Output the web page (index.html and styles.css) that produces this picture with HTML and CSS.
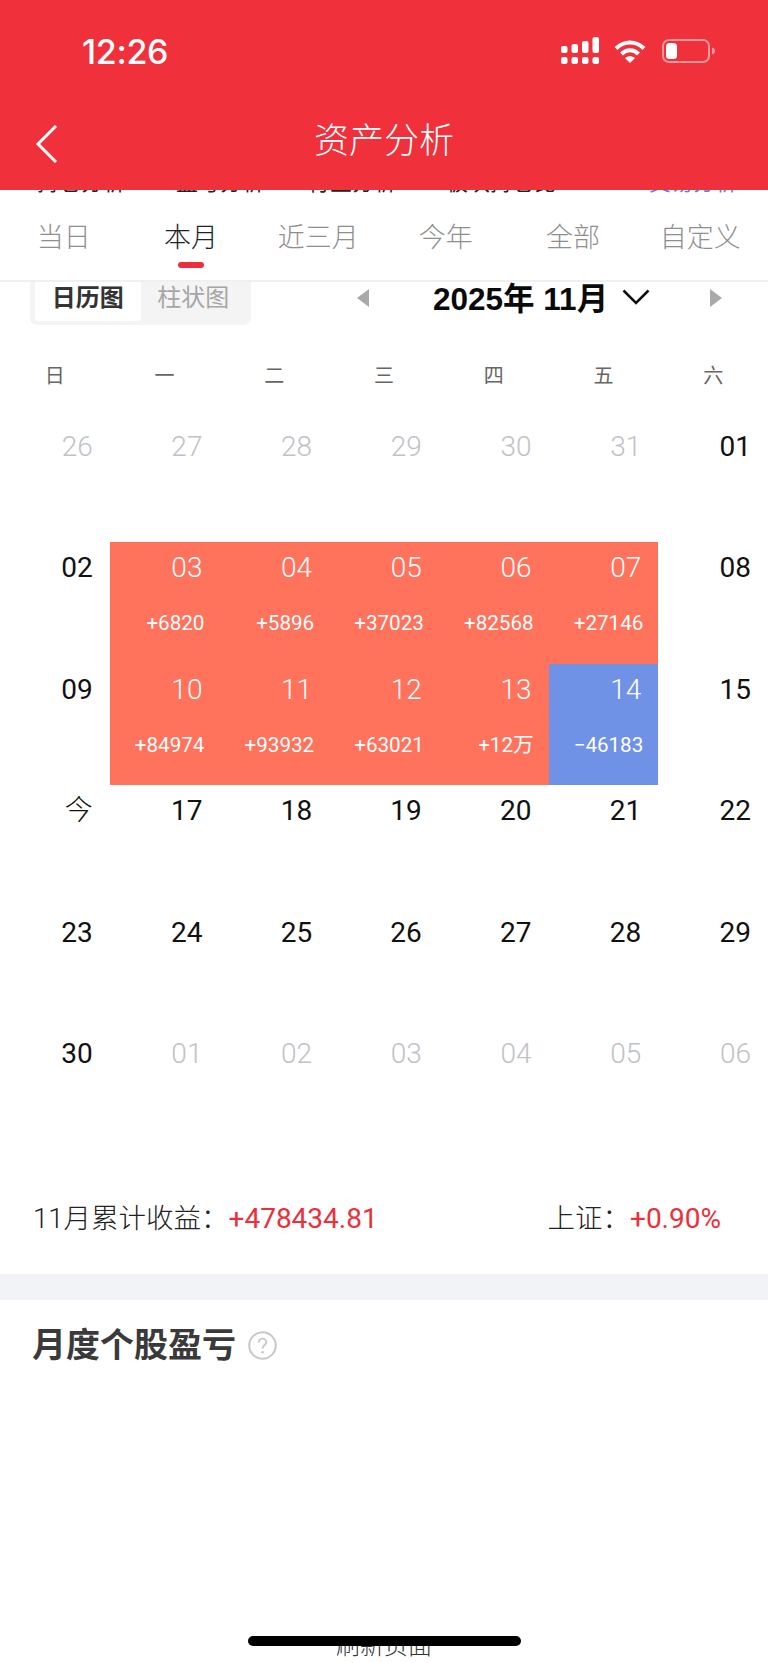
FILE: index.html
```html
<!DOCTYPE html>
<html lang="zh-CN">
<head>
<meta charset="utf-8">
<title>资产分析</title>
<link rel="stylesheet" href="styles.css">
</head>
<body>
<div class="page">
  <header class="top">
    <div class="status">
      <span class="time">12:26</span>
      <div class="status-icons">
        <svg class="signal" width="38" height="27" viewBox="0 0 38 27" fill="#fff"><rect x="0" y="9" width="6.5" height="7" rx="2"/><rect x="10.5" y="7" width="6.5" height="9" rx="2"/><rect x="21" y="4" width="6.5" height="12" rx="2"/><rect x="31.5" y="0" width="6.5" height="16" rx="2"/><rect x="0" y="20" width="6.5" height="7" rx="2"/><rect x="10.5" y="20" width="6.5" height="7" rx="2"/><rect x="21" y="20" width="6.5" height="7" rx="2"/><rect x="31.5" y="20" width="6.5" height="7" rx="2"/></svg>
        <svg class="wifi" width="32" height="24" viewBox="0 0 32 24" fill="none" stroke="#fff" stroke-width="4"><path d="M2 9.5C10 1.500 22 1.500 30 9.500"/><path d="M7.500 15C12.500 10 19.500 10 24.500 15"/><path d="M11 19 16 24 21 19C18 16.500 14 16.500 11 19Z" fill="#fff" stroke="none"/></svg>
        <svg class="battery" width="54" height="24" viewBox="0 0 54 24" fill="none"><rect x="1" y="1" width="46" height="22" rx="6" stroke="#fff" stroke-opacity=".5" stroke-width="2"/><rect x="4" y="4" width="11" height="16" rx="3.500" fill="#fff"/><path d="M50 8.500C52 9 53 10.500 53 12S52 15 50 15.500Z" fill="#fff" fill-opacity=".5"/></svg>
      </div>
    </div>
    <div class="nav">
      <svg class="back" width="22" height="38" viewBox="0 0 22 38" fill="none" stroke="#fff" stroke-width="3"><path d="M21 1 3 19 21 37"/></svg>
      <h1 class="nav-title">资产分析</h1>
    </div>
  </header>

  <div class="clipped">
    <span class="clip-a">持仓分析</span><span class="clip-b">盈亏分析</span><span class="clip-c">行业分析</span><span class="clip-d">板块持仓比</span><span class="clip-e">交易分析</span>
  </div>

  <nav class="tabs">
    <span class="tab">当日</span>
    <span class="tab tab-active">本月</span>
    <span class="tab">近三月</span>
    <span class="tab">今年</span>
    <span class="tab">全部</span>
    <span class="tab">自定义</span>
  </nav>

  <section class="toolbar">
    <div class="toggle">
      <span class="toggle-item toggle-on">日历图</span>
      <span class="toggle-item">柱状图</span>
    </div>
    <div class="month-picker">
      <span class="arrow arrow-left"></span>
      <span class="month">2025年 11月</span>
      <svg class="month-chevron" width="28" height="16" viewBox="0 0 28 16" fill="none" stroke="#111" stroke-width="2.500"><path d="M1.500 1.500 14 14 26.500 1.500"/></svg>
      <span class="arrow arrow-right"></span>
    </div>
  </section>

  <div class="weekdays">
    <span>日</span><span>一</span><span>二</span><span>三</span><span>四</span><span>五</span><span>六</span>
  </div>

  <div class="calendar">
    <div class="cell muted"><span class="num">26</span></div>
    <div class="cell muted"><span class="num">27</span></div>
    <div class="cell muted"><span class="num">28</span></div>
    <div class="cell muted"><span class="num">29</span></div>
    <div class="cell muted"><span class="num">30</span></div>
    <div class="cell muted"><span class="num">31</span></div>
    <div class="cell"><span class="num">01</span></div>

    <div class="cell"><span class="num">02</span></div>
    <div class="cell up"><span class="num">03</span><span class="delta">+6820</span></div>
    <div class="cell up"><span class="num">04</span><span class="delta">+5896</span></div>
    <div class="cell up"><span class="num">05</span><span class="delta">+37023</span></div>
    <div class="cell up"><span class="num">06</span><span class="delta">+82568</span></div>
    <div class="cell up"><span class="num">07</span><span class="delta">+27146</span></div>
    <div class="cell"><span class="num">08</span></div>

    <div class="cell"><span class="num">09</span></div>
    <div class="cell up"><span class="num">10</span><span class="delta">+84974</span></div>
    <div class="cell up"><span class="num">11</span><span class="delta">+93932</span></div>
    <div class="cell up"><span class="num">12</span><span class="delta">+63021</span></div>
    <div class="cell up"><span class="num">13</span><span class="delta">+12万</span></div>
    <div class="cell down"><span class="num">14</span><span class="delta">−46183</span></div>
    <div class="cell"><span class="num">15</span></div>

    <div class="cell today"><span class="num">今</span></div>
    <div class="cell"><span class="num">17</span></div>
    <div class="cell"><span class="num">18</span></div>
    <div class="cell"><span class="num">19</span></div>
    <div class="cell"><span class="num">20</span></div>
    <div class="cell"><span class="num">21</span></div>
    <div class="cell"><span class="num">22</span></div>

    <div class="cell"><span class="num">23</span></div>
    <div class="cell"><span class="num">24</span></div>
    <div class="cell"><span class="num">25</span></div>
    <div class="cell"><span class="num">26</span></div>
    <div class="cell"><span class="num">27</span></div>
    <div class="cell"><span class="num">28</span></div>
    <div class="cell"><span class="num">29</span></div>

    <div class="cell"><span class="num">30</span></div>
    <div class="cell muted"><span class="num">01</span></div>
    <div class="cell muted"><span class="num">02</span></div>
    <div class="cell muted"><span class="num">03</span></div>
    <div class="cell muted"><span class="num">04</span></div>
    <div class="cell muted"><span class="num">05</span></div>
    <div class="cell muted"><span class="num">06</span></div>
  </div>

  <div class="summary">
    <div class="summary-item"><span class="label">11月累计收益：</span><span class="red">+478434.81</span></div>
    <div class="summary-item"><span class="label">上证：</span><span class="red">+0.90%</span></div>
  </div>

  <div class="divider"></div>

  <div class="heading">
    <h2 class="heading-text">月度个股盈亏</h2>
    <svg class="help" width="29" height="29" viewBox="0 0 28 28" fill="none"><circle cx="14" cy="14" r="12.800" stroke="#c8c8c8" stroke-width="2"/><path d="M10.300 11C10.300 8.800 12 7.300 14 7.300S17.700 8.800 17.700 10.800C17.700 13.400 14 13.800 14 17" stroke="#c8c8c8" stroke-width="1.800"/><circle cx="14" cy="20.500" r="1.300" fill="#c8c8c8"/></svg>
  </div>

  <div class="refresh">刷新页面</div>
  <div class="home-bar"></div>
</div>
</body>
</html>
```

FILE: styles.css
```css
* { box-sizing: border-box; }
html, body { margin: 0; padding: 0; background: #fff; }
body { font-family: "Liberation Sans", "Noto Sans CJK SC", sans-serif; color: #111; }
h1, h2 { margin: 0; font: inherit; }
.page { position: relative; width: 768px; height: 1663px; overflow: hidden; display: flex; flex-direction: column; background: #fff; }

.top { height: 190px; background: #f0303a; color: #fff; flex: none; }
.status { height: 102px; padding: 40px 52px 0 82px; display: flex; justify-content: space-between; align-items: flex-start; }
.time { font-family: Inter, "Liberation Sans", sans-serif; font-size: 34px; font-weight: 500; line-height: 24px; letter-spacing: -.3px; }
.status-icons { display: flex; align-items: flex-start; margin-top: -1px; }
.signal { margin-top: -2px; margin-right: 15px; }
.wifi { margin-right: 16px; }
.nav { position: relative; display: flex; justify-content: center; padding-top: 15px; }
.back { position: absolute; left: 35px; top: 23px; }
.nav-title { font-size: 35px; line-height: 48px; font-weight: 300; }

.clipped { height: 4px; overflow: hidden; display: flex; align-items: flex-start; font-size: 22px; line-height: 0; color: #222; flex: none; }
.clipped span { display: block; height: 0; margin-top: -7px; white-space: nowrap; }
.clip-a { margin-left: 37px; }
.clip-b { margin-left: 51px; }
.clip-c { margin-left: 44px; }
.clip-d { margin-left: 50px; }
.clip-e { margin-left: 93px; color: #4f84e6; }

.tabs { height: 88px; display: grid; grid-template-columns: repeat(6, 1fr); border-bottom: 2px solid #f0f0f0; padding: 25px 4px 0 0; flex: none; }
.tab { position: relative; text-align: center; font-size: 27px; line-height: 38px; font-weight: 300; color: #8f8f8f; }
.tab-active { color: #222; }
.tab-active::after { content: ""; position: absolute; left: 50%; bottom: 12px; width: 26px; height: 6px; margin-left: -13px; background: #ee2e3b; border-radius: 3px; }

.toolbar { height: 43px; padding-left: 30px; display: flex; flex: none; }
.toggle { width: 221px; height: 43px; padding: 0 5px 4px; display: flex; background: #f4f4f4; border-radius: 0 0 7px 7px; }
.toggle-item { width: 107px; text-align: center; font-size: 24px; line-height: 32px; font-weight: 400; color: #a6a6a6; }
.toggle-on { background: #fff; color: #333; font-weight: 700; border-radius: 0 0 4px 4px; }
.month-picker { position: relative; flex: 1; display: flex; align-items: center; padding-left: 182px; }
.month { font-size: 31.500px; line-height: 36px; font-weight: 700; color: #0a0a0a; margin-top: -9px; white-space: nowrap; }
.month-chevron { margin-left: 14px; margin-top: -14px; flex: none; }
.arrow { position: absolute; top: 7px; width: 0; height: 0; border-top: 9px solid transparent; border-bottom: 9px solid transparent; }
.arrow-left { left: 106px; border-right: 12px solid #a9a9a9; }
.arrow-right { left: 459px; border-left: 12px solid #a9a9a9; }

.weekdays { display: grid; grid-template-columns: repeat(7, 1fr); padding-top: 36px; height: 96px; text-align: center; font-size: 20px; line-height: 30px; color: #666; flex: none; }

.calendar { display: grid; grid-template-columns: repeat(7, 1fr); grid-auto-rows: 121.400px; flex: none; }
.cell { display: flex; flex-direction: column; align-items: flex-end; padding-right: 17px; }
.num { font-family: Roboto, "Noto Sans CJK SC", sans-serif; font-size: 28px; line-height: 52px; color: #111; }
.delta { font-family: Roboto, "Noto Sans CJK SC", sans-serif; font-size: 20.600px; line-height: 58px; color: #fff; margin-right: -2px; }
.muted .num { color: #c0c2c8; font-weight: 300; }
.today .num { font-weight: 300; }
.up { background: #ff725c; }
.down { background: #7092e6; }
.up .num, .down .num { color: #fff; font-weight: 300; }

.summary { height: 125px; padding: 51px 47px 0 33px; display: flex; justify-content: space-between; font-family: Roboto, "Noto Sans CJK SC", sans-serif; font-size: 28px; line-height: 38px; font-weight: 300; color: #222; flex: none; }
.summary-item { display: flex; }
.label { font-size: 27.500px; }
.red { color: #ee2e3b; font-weight: 400; }

.divider { height: 26px; background: #f2f3f7; flex: none; }

.heading { display: flex; align-items: center; padding: 22px 0 0 32px; gap: 12px; }
.heading-text { font-size: 34px; line-height: 46px; font-weight: 700; color: #3a3a3a; }

.refresh { position: absolute; left: 0; right: 0; top: 1637px; height: 20px; overflow: hidden; text-align: center; font-size: 24px; line-height: 0; padding-top: 9px; font-weight: 300; color: #333; }
.home-bar { position: absolute; left: 248px; top: 1636px; width: 273px; height: 10px; background: #000; border-radius: 5px; }
```
